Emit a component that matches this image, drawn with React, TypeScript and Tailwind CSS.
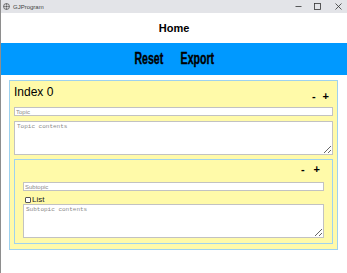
import React from "react";

export default function App() {
  return (
    <div className="w-[347px] h-[273px] overflow-hidden bg-white border-l border-[#8e8e8e] font-['Liberation_Sans',Arial,sans-serif]">
      {/* title bar */}
      <div className="h-[13px] bg-[#e3e4e8] flex items-center">
        <svg width="7" height="7" viewBox="0 0 10 10" className="ml-[2px]">
          <circle cx="5" cy="5" r="4.2" fill="none" stroke="#555" strokeWidth="1.2" />
          <circle cx="5" cy="5" r="1.6" fill="#555" />
          <path d="M5 0.8 V3 M5 7 V9.2 M0.8 5 H3 M7 5 H9.2" stroke="#555" strokeWidth="1" />
        </svg>
        <span className="ml-[3px] text-[6px] leading-none text-[#444]">GJProgram</span>
        <div className="ml-auto flex items-center">
          <svg width="7" height="7" viewBox="0 0 7 7" className="mr-[12px]">
            <path d="M0.5 3.5 H6.5" stroke="#333" strokeWidth="0.8" />
          </svg>
          <svg width="7" height="7" viewBox="0 0 7 7" className="mr-[14px]">
            <rect x="0.5" y="0.5" width="6" height="6" fill="none" stroke="#333" strokeWidth="0.8" />
          </svg>
          <svg width="7" height="7" viewBox="0 0 7 7" className="mr-[5px]">
            <path d="M0.5 0.5 L6.5 6.5 M6.5 0.5 L0.5 6.5" stroke="#333" strokeWidth="0.8" />
          </svg>
        </div>
      </div>

      {/* header */}
      <div className="h-[30px] flex items-center justify-center">
        <span className="text-[11px] font-bold text-black leading-none">Home</span>
      </div>

      {/* nav */}
      <div className="h-[32px] bg-[#0099ff] flex items-center justify-center gap-[2px] pl-[2px]">
        <span className="inline-block scale-x-[0.66] text-[16px] font-bold leading-none text-black [-webkit-text-stroke:0.4px_black]">Reset</span>
        <span className="inline-block scale-x-[0.66] text-[16px] font-bold leading-none text-black [-webkit-text-stroke:0.4px_black]">Export</span>
      </div>

      {/* main */}
      <div className="pt-[5px] pl-[8px]">
        <div className="w-[329px] border border-[#9fd2ee] bg-[#fffaa9] px-[4px] pb-[5px]">
          <div className="h-[26px] flex justify-between">
            <span className="self-start pt-[5px] text-[12px] leading-none text-black">Index 0</span>
            <div className="self-end pb-[5px] mr-[4px] flex gap-[7px] text-[11px] font-bold leading-none text-black">
              <span>-</span>
              <span>+</span>
            </div>
          </div>
          <input
            placeholder="Topic"
            className="block w-full h-[9px] bg-white border border-[#c2c2c2] px-[1px] text-[6px] leading-none placeholder:text-[#8a8a8a] outline-none"
          />
          <textarea
            placeholder="Topic contents"
            className="block mt-[5px] w-full h-[34px] bg-white border border-[#c2c2c2] px-[2px] py-[1px] text-[6px] leading-[7px] font-['Liberation_Mono',monospace] placeholder:text-[#8a8a8a] outline-none"
          />
          <div className="mt-[4px] border border-[#9fd2ee] px-[8px] pb-[5px]">
            <div className="h-[22px] flex justify-end">
              <div className="pt-[4px] mr-[4px] flex gap-[9px] text-[11px] font-bold leading-none text-black">
                <span>-</span>
                <span>+</span>
              </div>
            </div>
            <input
              placeholder="Subtopic"
              className="block w-full h-[9px] bg-white border border-[#c2c2c2] px-[1px] text-[6px] leading-none placeholder:text-[#8a8a8a] outline-none"
            />
            <div className="mt-[5px] h-[8px] flex items-center ml-[2px] gap-[1px]">
              <span className="w-[6px] h-[6px] border border-[#555] bg-white rounded-[1px]" />
              <span className="text-[8px] leading-none text-[#222]">List</span>
            </div>
            <textarea
              placeholder="Subtopic contents"
              className="block w-full h-[34px] bg-white border border-[#c2c2c2] px-[2px] py-[1px] text-[6px] leading-[7px] font-['Liberation_Mono',monospace] placeholder:text-[#8a8a8a] outline-none"
            />
          </div>
        </div>
      </div>
    </div>
  );
}
